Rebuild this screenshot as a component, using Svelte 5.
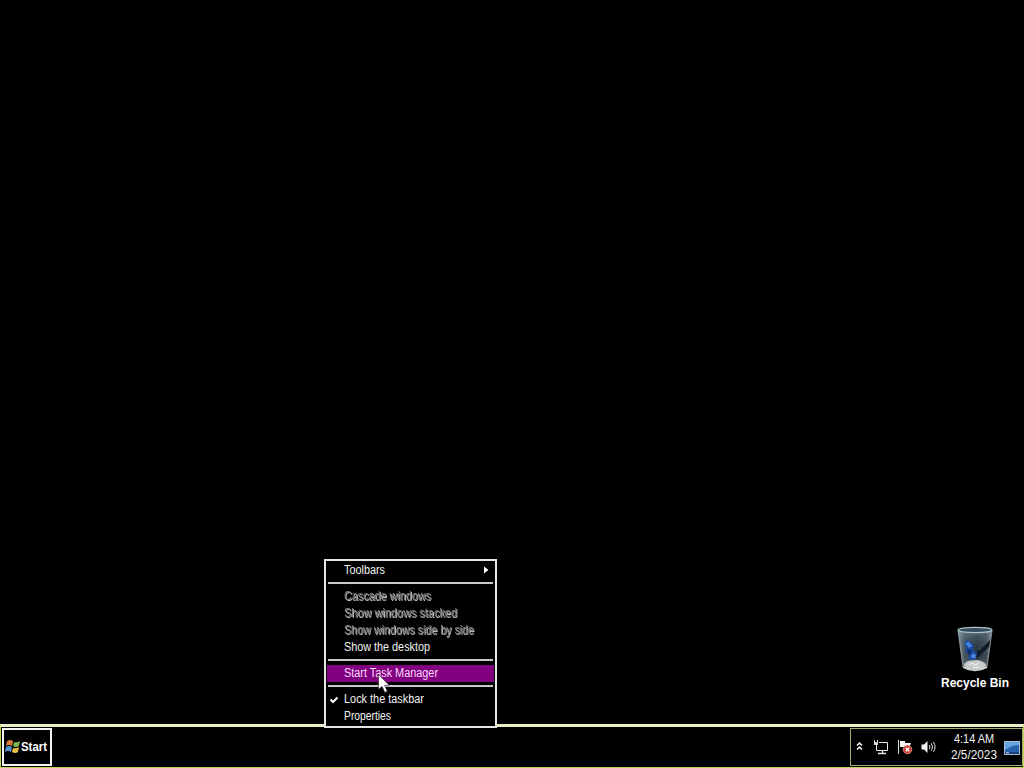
<script>
  const groups = [
    [{ label: 'Toolbars', submenu: true, width: 41 }],
    [
      { label: 'Cascade windows', disabled: true, width: 87 },
      { label: 'Show windows stacked', disabled: true, width: 113 },
      { label: 'Show windows side by side', disabled: true, width: 130 },
      { label: 'Show the desktop', width: 86 }
    ],
    [{ label: 'Start Task Manager', selected: true, width: 94 }],
    [
      { label: 'Lock the taskbar', checked: true, width: 80 },
      { label: 'Properties', width: 47 }
    ]
  ];
</script>

<div class="screen">
  <main class="desktop">
    <div class="shortcut">
      <svg class="bin" width="40" height="48" viewBox="0 0 40 48">
        <defs>
          <linearGradient id="glass" x1="0" x2="1" y1="0" y2="0">
            <stop offset="0" stop-color="#a9b9c0" />
            <stop offset="0.18" stop-color="#4c5b63" />
            <stop offset="0.55" stop-color="#26343d" />
            <stop offset="0.83" stop-color="#414d54" />
            <stop offset="1" stop-color="#9ca8ac" />
          </linearGradient>
          <linearGradient id="shade" x1="0" x2="0" y1="0" y2="1">
            <stop offset="0" stop-color="#718b99" stop-opacity="0.6" />
            <stop offset="0.6" stop-color="#253039" stop-opacity="0.1" />
            <stop offset="1" stop-color="#a5adb0" stop-opacity="0.6" />
          </linearGradient>
        </defs>
        <path d="M3 5 L8 42 Q20 49 32 42 L37 5 Z" fill="url(#glass)" />
        <path d="M3 5 L8 42 Q20 49 32 42 L37 5 Z" fill="url(#shade)" />
        <path d="M36 14 L25 25 L18 29 L22 33 L34 22 Z" fill="#111b27" />
        <path d="M9 18 L12 15 L16 17 L19 21 L18 25 L22 28 L21 33 L17 36 L13 33 L15 29 L10 27 L11 23 Z" fill="#1b4b9f" />
        <path d="M10 18 l4 -1 3 4 -3 2z M17 28l4 2 -1 4 -4-2z" fill="#4b86dd" />
        <path d="M12 24l4 1 1 4 -4 1z" fill="#102d6c" />
        <ellipse cx="20" cy="40" rx="11" ry="5" fill="#a8aeb0" />
        <path d="M9 40l4-4 5 1 4-2 5 2 4 3 -4 4 -13 0z" fill="#c9cdce" />
        <path d="M14 40l3-2 3 2 4-2M18 43l3-1 3 1" fill="none" stroke="#f0f2f2" />
        <path d="M8 42 Q20 49 32 42" fill="none" stroke="#d5d9da" stroke-width="1.5" />
        <path d="M3 6 L8 42 M37 6 L32 42" stroke="#9ba7ad" stroke-width="0.8" />
        <ellipse cx="20" cy="5" rx="17" ry="2.6" fill="#344e5b" stroke="#adc0c8" stroke-width="1.2" />
      </svg>
      <svg class="caption" width="70" height="14">
        <text x="1" y="11" textLength="68" lengthAdjust="spacingAndGlyphs">Recycle Bin</text>
      </svg>
    </div>
  </main>

  <footer class="taskbar">
    <button class="start">
      <svg width="16" height="16" viewBox="0 0 16 16">
        <path d="M2 2 Q5 0 8 2 L7 7 Q4 5 1 7z" fill="#d77936" />
        <path d="M9 3 Q12 4 15 2 L14 7 Q11 9 8 7z" fill="#7fb64a" />
        <path d="M1 8 Q4 6 7 8 L6 13 Q3 11 0 13z" fill="#5591d0" />
        <path d="M8 9 Q11 10 14 8 L13 13 Q10 15 7 13z" fill="#e3c043" />
      </svg>
      <svg width="28" height="16">
        <text x="0" y="12" textLength="26" lengthAdjust="spacingAndGlyphs">Start</text>
      </svg>
    </button>
    <div class="tray">
      <svg class="chevrons" width="8" height="12" viewBox="0 0 8 12">
        <path d="M1 4.5 L3.5 2 L6 4.5 M1 8.5 L3.5 6 L6 8.5" fill="none" stroke="#fff" stroke-width="1.5" />
      </svg>
      <svg class="network" width="16" height="16" viewBox="0 0 16 16">
        <path d="M6 3.5H14.5V11.5H3.5V6" fill="none" stroke="#e8e8e8" />
        <path d="M9.5 12V14M5 14.5H13" fill="none" stroke="#e8e8e8" stroke-width="1.3" />
        <path d="M1 1H2V3H4V1H5V6H1Z" fill="#d8d8d8" />
      </svg>
      <svg class="flag" width="16" height="16" viewBox="0 0 16 16">
        <path d="M1.5 1V15" stroke="#ddd" />
        <path d="M3 2H8V4H14L13 6.5L14 9H8V8H3Z" fill="#f5f5f5" />
        <circle cx="10.5" cy="10.5" r="4.3" fill="#c7382e" stroke="#efaaa2" stroke-width="0.7" />
        <path d="M8.8 8.8L12.2 12.2M12.2 8.8L8.8 12.2" stroke="#fff" stroke-width="1.4" />
      </svg>
      <svg class="volume" width="16" height="16" viewBox="0 0 16 16">
        <path d="M0.5 5.5H3L6.5 2V14L3 10.5H0.5Z" fill="#f2f2f2" />
        <path d="M8.3 6 Q9.7 8 8.3 10 M10.3 4.3 Q12.8 8 10.3 11.7 M12.3 2.8 Q15.8 8 12.3 13.2" fill="none" stroke="#ddd" />
      </svg>
      <svg class="clock" width="50" height="32">
        <text x="5" y="12" textLength="40" lengthAdjust="spacingAndGlyphs">4:14 AM</text>
        <text x="2" y="28" textLength="46" lengthAdjust="spacingAndGlyphs">2/5/2023</text>
      </svg>
      <svg class="peek" width="16" height="14" viewBox="0 0 16 14">
        <rect x="0.5" y="0.5" width="15" height="13" fill="#2865b0" stroke="#a5bdd5" />
        <path d="M1 1H15V4Q8 4 1 9Z" fill="#68a3df" />
        <path d="M1 11H15V13H1Z" fill="#163f76" />
        <path d="M2 11.8H5" stroke="#cce7e8" />
      </svg>
    </div>
  </footer>

  <div class="menu" role="menu">
    {#each groups as group, i}
      {#if i > 0}
        <div class="separator"></div>
      {/if}
      {#each group as item}
        <div class="item" class:disabled={item.disabled} class:selected={item.selected} role="menuitem">
          <span class="mark">
            {#if item.checked}
              <svg width="8" height="8" viewBox="0 0 8 8">
                <path d="M0.5 3.5L3 6L7.5 1.5" fill="none" stroke="#fff" stroke-width="2" />
              </svg>
            {/if}
          </span>
          <svg class="label" width="136" height="17">
            <text x="0" y="12" textLength={item.width} lengthAdjust="spacingAndGlyphs">{item.label}</text>
          </svg>
          {#if item.submenu}
            <svg class="arrow" width="5" height="8" viewBox="0 0 5 8">
              <path d="M0 0.5L4.5 4L0 7.5Z" fill="#fff" />
            </svg>
          {/if}
        </div>
      {/each}
    {/each}
  </div>

  <svg class="cursor" width="13" height="20" viewBox="0 0 13 20">
    <path d="M0.5 0.5V15.5L4 12.3L6.8 18.5L9.3 17.3L6.6 11.3H11.3Z" fill="#fff" stroke="#211021" stroke-width="0.6" />
  </svg>
</div>

<style>
  :global(body) {
    background: #000;
    overflow: hidden;
  }
  .screen {
    position: relative;
    display: flex;
    flex-direction: column;
    width: 1024px;
    height: 768px;
    background: #000;
    color: #fff;
    font-family: "Liberation Sans", Arial, sans-serif;
    font-size: 12px;
  }
  svg {
    display: block;
    flex: none;
    overflow: visible;
  }
  text {
    fill: #f2f2f2;
  }
  .desktop {
    display: flex;
    flex: 1;
    align-items: flex-end;
    justify-content: flex-end;
    padding: 0 14px 34px 0;
  }
  .shortcut {
    display: flex;
    flex-direction: column;
    align-items: center;
    gap: 3px;
  }
  .caption text,
  .start text {
    fill: #fff;
    font-size: 12px;
    font-weight: bold;
  }
  .taskbar {
    display: flex;
    box-sizing: border-box;
    height: 44px;
    justify-content: space-between;
    border: 1px solid #c4d455;
    border-top: 3px solid #e9edc9;
    padding: 1px 0 0 1px;
  }
  .start {
    display: flex;
    box-sizing: border-box;
    align-items: center;
    width: 50px;
    height: 38px;
    margin: 0;
    padding: 0 0 0 1px;
    border: 2px solid #f5f5ef;
    background: #000;
    font-family: inherit;
  }
  .tray {
    display: flex;
    box-sizing: border-box;
    align-items: center;
    width: 173px;
    height: 38px;
    border: 1px solid #a5aa72;
    padding-left: 5px;
  }
  .network {
    margin-left: 9px;
  }
  .flag {
    margin-left: 8px;
  }
  .volume {
    margin-left: 8px;
  }
  .clock {
    margin-left: 12px;
  }
  .peek {
    margin: 2px 0 0 5px;
  }
  .menu {
    position: absolute;
    left: 324px;
    top: 559px;
    box-sizing: border-box;
    width: 173px;
    height: 169px;
    padding: 1px;
    border: 2px solid #e5e8e1;
    background: #000;
  }
  .item {
    display: flex;
    align-items: center;
    height: 17px;
  }
  .mark {
    width: 14px;
    padding-left: 3px;
  }
  .disabled text {
    fill: #808080;
  }
  .disabled .label {
    filter: drop-shadow(1px 1px 0 #b8b8b8);
  }
  .selected {
    background: #800080;
  }
  .selected text {
    fill: #ffd9ff;
  }
  .arrow {
    margin: -2px 0 0 4px;
  }
  .separator {
    height: 2px;
    margin: 0 1px;
    border: solid #000;
    border-width: 3px 0 4px;
    background: #c8cac4;
  }
  .cursor {
    position: absolute;
    left: 378px;
    top: 674px;
  }
</style>
